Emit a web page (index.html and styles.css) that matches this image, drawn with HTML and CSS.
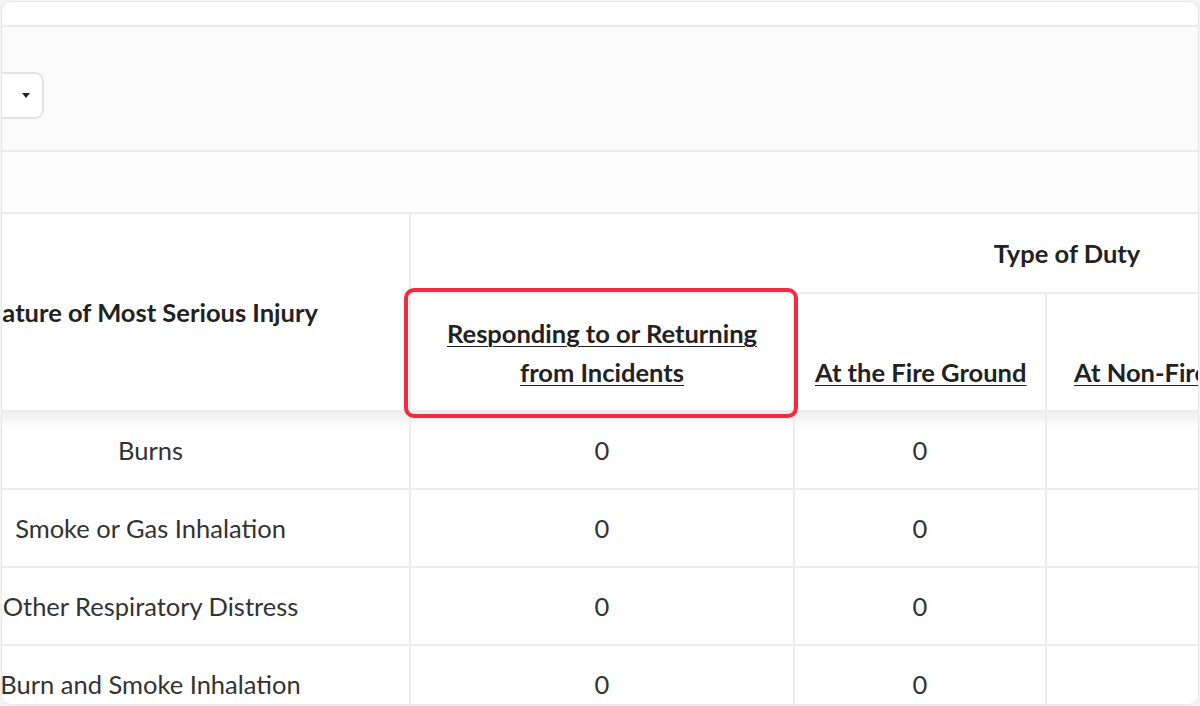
FILE: index.html
```html
<!DOCTYPE html>
<html>
<head>
<meta charset="utf-8">
<link rel="stylesheet" href="styles.css">
</head>
<body>
<div class="card">
  <div class="topbar"></div>
  <div class="filters">
    <div class="select"><span class="caret"></span></div>
  </div>
  <div class="blank"></div>
  <div class="tablewrap">
    <table class="grid">
      <colgroup>
        <col class="w-name">
        <col class="w-a">
        <col class="w-b">
        <col class="w-c">
        <col class="w-d">
      </colgroup>
      <thead>
        <tr class="h1">
          <th class="c-name" rowspan="2">Nature of Most Serious Injury</th>
          <th class="c-group" colspan="4">Type of Duty</th>
        </tr>
        <tr class="h2">
          <th class="c-a"><span class="hl"></span><a href="#">Responding to or Returning from Incidents</a></th>
          <th class="c-b"><a href="#">At the Fire Ground</a></th>
          <th class="c-c"><a href="#">At Non-Fire Emergencies</a></th>
          <th class="c-d"><a href="#">All Other On-Duty</a></th>
        </tr>
      </thead>
      <tbody>
        <tr class="first"><td>Burns</td><td>0</td><td>0</td><td>0</td><td>0</td></tr>
        <tr><td>Smoke or Gas Inhalation</td><td>0</td><td>0</td><td>0</td><td>0</td></tr>
        <tr><td>Other Respiratory Distress</td><td>0</td><td>0</td><td>0</td><td>0</td></tr>
        <tr><td>Burn and Smoke Inhalation</td><td>0</td><td>0</td><td>0</td><td>0</td></tr>
      </tbody>
    </table>
  </div>
</div>
</body>
</html>
```
FILE: styles.css
```css
* { box-sizing: border-box; }
html, body { margin: 0; padding: 0; }
body {
  background: #f3f3f6;
  padding: 1px 1px 1px 1px;
  height: 706px;
  overflow: hidden;
  font-family: Lato, "Open Sans", sans-serif;
}
.card {
  background: #ffffff;
  border: 1px solid #e7e7ec;
  border-radius: 10px;
  height: 704px;
  overflow: hidden;
}
.topbar {
  height: 25px;
  border-bottom: 2px solid #ebebeb;
}
.filters {
  height: 125px;
  background: #fbfbfb;
  border-bottom: 2px solid #ebebeb;
  padding-top: 45px;
}
.select {
  width: 200px;
  height: 47px;
  margin-left: -158px;
  background: #ffffff;
  border: 2px solid #e3e3e3;
  border-radius: 9px;
  display: flex;
  align-items: center;
  justify-content: flex-end;
  padding-right: 12px;
}
.caret {
  width: 0;
  height: 0;
  border-left: 4px solid transparent;
  border-right: 4px solid transparent;
  border-top: 5px solid #222;
}
.blank {
  height: 62px;
  background: #fdfdfd;
  border-bottom: 2px solid #ebebeb;
}
.tablewrap {
  overflow: hidden;
}
.grid {
  border-collapse: collapse;
  margin-left: -110px;
  table-layout: fixed;
  width: 1832px;
  font-size: 25.5px;
  color: #333;
}
.w-name { width: 518px; }
.w-a { width: 384px; }
.w-b { width: 252px; }
.w-c { width: 340px; }
.w-d { width: 338px; }
.grid th, .grid td {
  border: 2px solid #ececec;
  text-align: center;
  padding: 0;
}
.grid tr > :first-child { border-left: none; }
.grid thead tr:first-child th { border-top: none; }
.grid th {
  font-weight: 700;
  color: #222;
}
.h1 { height: 79px; }
.h1 th { vertical-align: middle; }
.h2 { height: 118px; }
.h2 th {
  vertical-align: bottom;
  padding: 0 20px 18px;
  line-height: 39px;
  white-space: nowrap;
}
.h2 th.c-a { white-space: normal; padding-left: 30px; padding-right: 30px; }
.h2 a {
  color: #222;
  text-decoration: underline;
  text-underline-offset: 3px;
  text-decoration-thickness: 1px;
}
.c-a { position: relative; }
.hl {
  position: absolute;
  left: -7px;
  right: -5px;
  top: -6px;
  bottom: -8px;
  border: 4px solid #f42a3f;
  border-radius: 10px;
  z-index: 2;
}
.grid tbody tr { height: 78px; }
.grid td { vertical-align: middle; }
.grid tbody tr.first td {
  background: linear-gradient(rgba(0,0,0,0.07), rgba(0,0,0,0) 16px);
}
```
